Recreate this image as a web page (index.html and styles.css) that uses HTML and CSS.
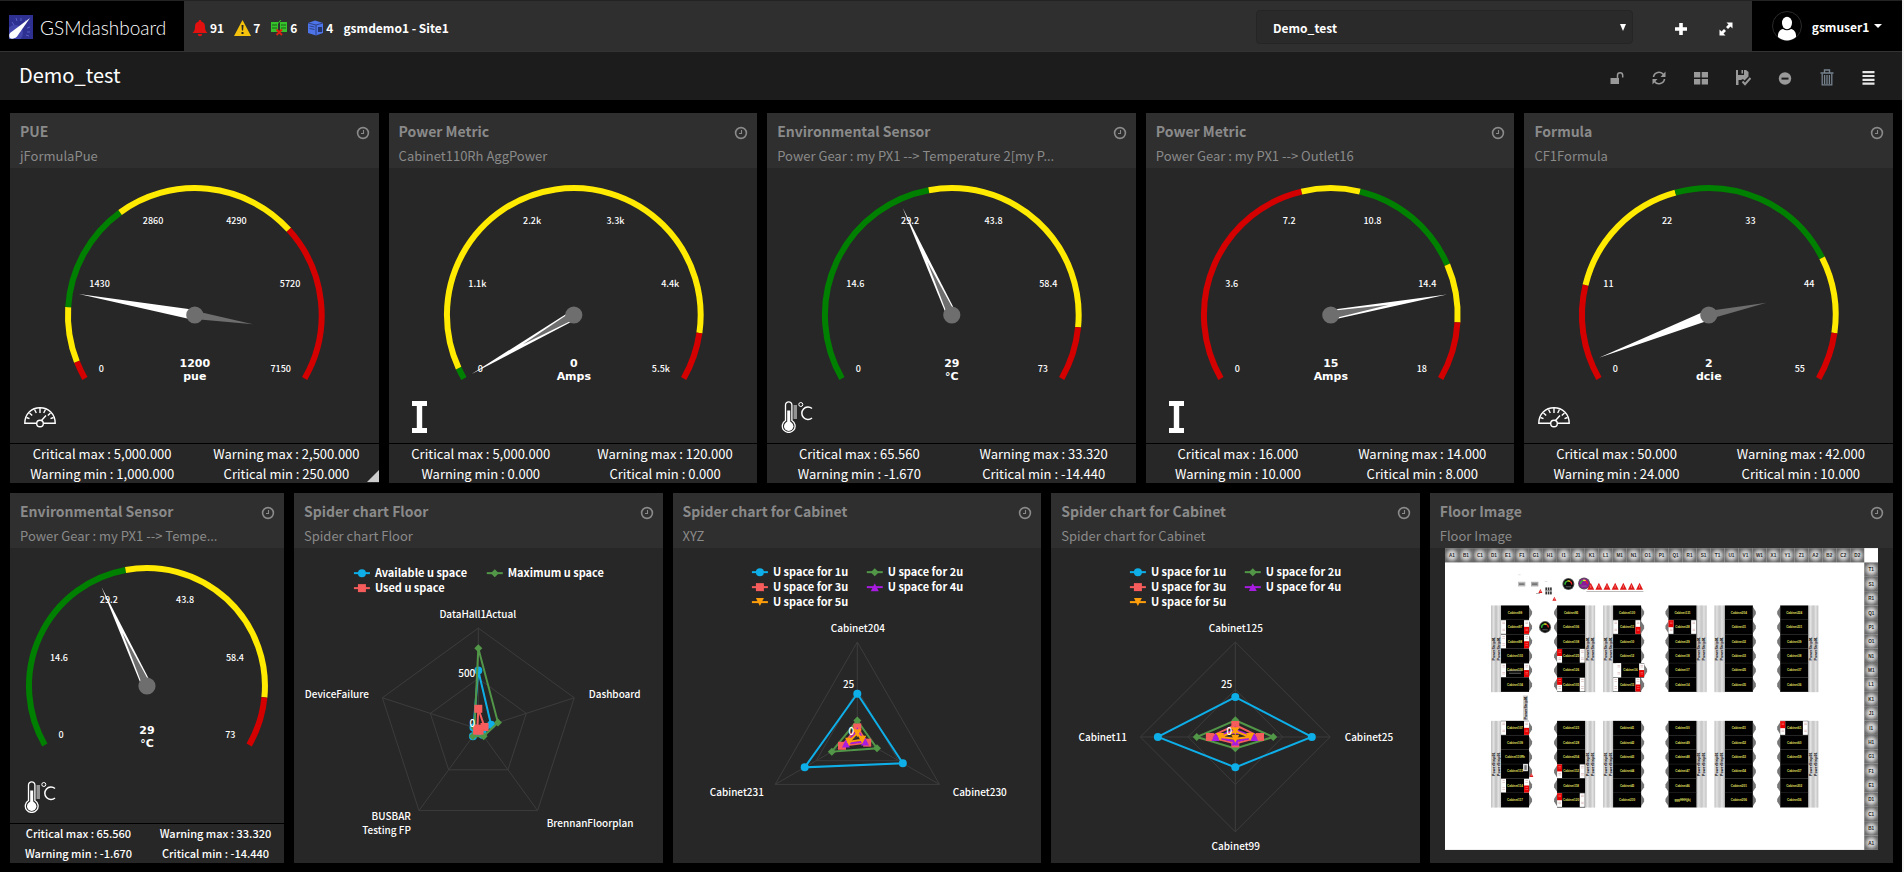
FILE: index.html
```html
<!DOCTYPE html>
<html lang="en">
<head>
<meta charset="utf-8">
<title>GSMdashboard</title>
<link rel="stylesheet" href="styles.css">
</head>
<body>
<svg class="sprite" aria-hidden="true">
  <symbol id="clock" viewBox="0 0 14 14"><circle cx="7" cy="7" r="5.4" fill="none" stroke="currentColor" stroke-width="1.6"/><path d="M7.5 4v3.5H5" fill="none" stroke="currentColor" stroke-width="1.1"/></symbol>
  <symbol id="dial" viewBox="0 0 32 32"><g fill="none" stroke="#fff" stroke-width="1.4"><path d="M13 22.300H.8C.8 13 7.500 6.800 16 6.800S31.200 13 31.200 22.300H19"/><circle cx="16" cy="22.500" r="3.300"/><path d="M16 7v5M10.500 8.500l1.800 3.500M21.500 8.500l-1.800 3.500M5.500 12l2.700 2.500M26.500 12l-2.700 2.500M2.500 16.500l3 1.200M29.500 16.500l-3 1.200M17.500 19.500l4.500-5"/></g></symbol>
  <symbol id="ibeam" viewBox="0 0 32 32"><path d="M9 0h15v5h-4.800v22H24v5H9v-5h4.800V5H9z" fill="#fff"/></symbol>
  <symbol id="thermo" viewBox="0 0 32 32"><g fill="none" stroke="#fff"><path d="M4.500 19.500V4a3.200 3.200 0 0 1 6.400 0v15.500a6.400 6.400 0 1 1-6.400 0z" stroke-width="1.300"/><path d="M7.700 9.500V22" stroke-width="3"/><path d="M12.500 5h3.500M12.500 7h3.500M12.500 9h3.500M12.500 11h3.500M12.500 13h3.500M12.500 15h3.500M12.500 17h3.500" stroke-width="1"/><circle cx="19.800" cy="3.500" r="2" stroke-width="1"/><path d="M31 7.500a6.200 6.200 0 1 0 0 9.500" stroke-width="1.500"/></g><circle cx="7.700" cy="25.200" r="4.700" fill="#fff"/></symbol>
</svg>

<header class="topbar">
  <a class="brand" href="#">
    <svg width="24" height="24" viewBox="0 0 24 24" aria-hidden="true"><rect width="24" height="24" fill="#2e3192"/><circle cx="6" cy="18" r="8" fill="#4347ac"/><path d="M3 7l2 3M7 3l1 3M12 3v3M17 5l-1 2M21 12l-3 1M21 17h-3M20 21l-3-1" stroke="#5a5fc4" stroke-width="1"/><path d="M21 3L8 21.500a4 4 0 0 1-7-3.500z" fill="#fff"/><circle cx="3.200" cy="20.800" r="3" fill="#fff"/></svg>
    <span>GSMdashboard</span>
  </a>
  <div class="alerts">
    <span class="alert"><svg width="16" height="18" viewBox="0 0 16 18" aria-hidden="true"><path d="M8 1c1 0 1.300.6 1.300 1.400 2.500.6 3.700 2.600 3.700 5 0 3.400.8 5 2.500 6.600H.5C2.200 12.400 3 10.800 3 7.400c0-2.400 1.200-4.400 3.700-5C6.700 1.600 7 1 8 1zM5.800 15h4.400a2.200 2.200 0 0 1-4.400 0z" fill="#e31010"/></svg>91</span>
    <span class="alert"><svg width="17" height="16" viewBox="0 0 17 16" aria-hidden="true"><path d="M8.500 0L17 16H0z" fill="#f4c20d"/><path d="M7.500 5h2l-.4 5.500H7.900zM7.500 12h2v2h-2z" fill="#222"/></svg>7</span>
    <span class="alert"><svg width="18" height="16" viewBox="0 0 18 16" aria-hidden="true"><path d="M1 2h7v10H1zM10 2h7v10h-7z" fill="#36c22a"/><path d="M2 5h5M2 8h5M11 5h5M11 8h5" stroke="#1c5c16"/><path d="M7 4c2 0 2-4 4-3.500" fill="none" stroke="#36c22a"/><path d="M6.500 9.500l5.500 5.500M12 9.500l-5.500 5.500" stroke="#e32010" stroke-width="1.800"/></svg>6</span>
    <span class="alert"><svg width="17" height="16" viewBox="0 0 17 16" aria-hidden="true"><path d="M1 3l7-2.500L16 3v10l-7 2.500L1 13z" fill="#4d74e8"/><path d="M1 3l8 2 7-2M9 5v10.500M2.500 6l5 1M2.500 8.500l5 1" fill="none" stroke="#24356d" stroke-width=".8"/><rect x="11" y="7" width="4" height="5" fill="#24356d"/></svg>4</span>
    <span>gsmdemo1 - Site1</span>
  </div>
  <div class="picker">
    <select aria-label="Dashboard"><option>Demo_test</option></select>
  </div>
  <button class="nav-btn" aria-label="Add"><svg width="12" height="12" viewBox="0 0 12 12"><path d="M4.200 0h3.600v4.200H12v3.600H7.800V12H4.200V7.800H0V4.200h4.200z" fill="#fff"/></svg></button>
  <button class="nav-btn" aria-label="Full screen"><svg width="14" height="14" viewBox="0 0 14 14"><path d="M7.500 .5H13.500V6.500L11.500 4.500 9 7 7 5 9.500 2.500zM6.500 13.500H.5V7.500L2.500 9.500 5 7 7 9 4.500 11.500z" fill="#fff"/></svg></button>
  <button class="user">
    <svg width="30" height="30" viewBox="0 0 30 30" aria-hidden="true"><circle cx="15" cy="15" r="14.500" fill="none" stroke="#2a2a2a"/><ellipse cx="15" cy="12" rx="5" ry="6.200" fill="#fff"/><path d="M6 26c-.5-4.500 2-7.500 5-8 2.500 1.800 5.500 1.800 8 0 3 .5 5.500 3.500 5 8-5 4.500-13 4.500-18 0z" fill="#fff"/></svg>
    <span>gsmuser1</span>
    <i class="caret"></i>
  </button>
</header>

<div class="titlebar">
  <h1>Demo_test</h1>
  <div class="tools">
    <button aria-label="Unlock"><svg width="14" height="14" viewBox="0 0 14 14"><path d="M.5 7h8.500v6H.5z" fill="#999"/><path d="M7.500 7V4.300a2.600 2.600 0 0 1 5.200 0V6.500" fill="none" stroke="#999" stroke-width="1.500"/></svg></button>
    <button aria-label="Refresh"><svg width="14" height="14" viewBox="0 0 14 14"><path d="M1.500 6A5.600 5.600 0 0 1 11.500 3.500M12.500 8A5.600 5.600 0 0 1 2.500 10.500" fill="none" stroke="#999" stroke-width="1.600"/><path d="M13.500.5V6H8.500zM.5 13.500V8H5.500z" fill="#999"/></svg></button>
    <button aria-label="Layout"><svg width="14" height="14" viewBox="0 0 14 14"><path d="M0 1h6.300v5.500H0zM7.700 1H14v5.500H7.700zM0 8h6.300v5.500H0zM7.700 8H14v5.500H7.700z" fill="#999"/></svg></button>
    <button aria-label="Save"><svg width="16" height="16" viewBox="0 0 16 16"><path d="M1 0h2v5h6V0h2l2.500 2v4.500L9.500 10.500 8 9 6 10H3.500v5H1zM6.500 0H8v3.500H6.500z" fill="#999"/><path d="M7.500 11.500l2.500 2.700 5.500-6.200" fill="none" stroke="#999" stroke-width="2"/></svg></button>
    <button aria-label="Remove"><svg width="14" height="14" viewBox="0 0 14 14"><circle cx="7" cy="7.500" r="6.200" fill="#999"/><path d="M3.500 6.600h7v2h-7z" fill="#1c1c1c"/></svg></button>
    <button aria-label="Delete"><svg width="14" height="18" viewBox="0 0 14 18"><path d="M.5 4h13M4.500 3.500V1h5v2.500" fill="none" stroke="#76828e" stroke-width="1.400"/><path d="M2.200 4.500v11.300h9.600V4.500M4.600 6v9M7 6v9M9.400 6v9" fill="none" stroke="#76828e" stroke-width="1.300"/></svg></button>
    <button aria-label="Menu"><svg width="14" height="14" viewBox="0 0 14 14"><path d="M.5 0h12v2.200H.5zM.5 3.900h12v2.200H.5zM.5 7.700h12v2.200H.5zM.5 11.500h12v2.200H.5z" fill="#e6e6e6"/></svg></button>
  </div>
</div>

<main class="board">
  <section class="card">
    <header><h2>PUE</h2><p>jFormulaPue</p><svg class="clock"><use href="#clock"/></svg></header>
    <div class="body"><svg class="chart" data-gauge="pue"></svg><svg class="kind"><use href="#dial"/></svg></div>
    <footer><span>Critical max : 5,000.000</span><span>Warning max : 2,500.000</span><span>Warning min : 1,000.000</span><span>Critical min : 250.000</span></footer>
    <i class="grip"></i>
  </section>
  <section class="card">
    <header><h2>Power Metric</h2><p>Cabinet110Rh AggPower</p><svg class="clock"><use href="#clock"/></svg></header>
    <div class="body"><svg class="chart" data-gauge="cabinet"></svg><svg class="kind"><use href="#ibeam"/></svg></div>
    <footer><span>Critical max : 5,000.000</span><span>Warning max : 120.000</span><span>Warning min : 0.000</span><span>Critical min : 0.000</span></footer>
  </section>
  <section class="card">
    <header><h2>Environmental Sensor</h2><p>Power Gear : my PX1 --&gt; Temperature 2[my P...</p><svg class="clock"><use href="#clock"/></svg></header>
    <div class="body"><svg class="chart" data-gauge="temp"></svg><svg class="kind"><use href="#thermo"/></svg></div>
    <footer><span>Critical max : 65.560</span><span>Warning max : 33.320</span><span>Warning min : -1.670</span><span>Critical min : -14.440</span></footer>
  </section>
  <section class="card">
    <header><h2>Power Metric</h2><p>Power Gear : my PX1 --&gt; Outlet16</p><svg class="clock"><use href="#clock"/></svg></header>
    <div class="body"><svg class="chart" data-gauge="outlet"></svg><svg class="kind"><use href="#ibeam"/></svg></div>
    <footer><span>Critical max : 16.000</span><span>Warning max : 14.000</span><span>Warning min : 10.000</span><span>Critical min : 8.000</span></footer>
  </section>
  <section class="card">
    <header><h2>Formula</h2><p>CF1Formula</p><svg class="clock"><use href="#clock"/></svg></header>
    <div class="body"><svg class="chart" data-gauge="dcie"></svg><svg class="kind"><use href="#dial"/></svg></div>
    <footer><span>Critical max : 50.000</span><span>Warning max : 42.000</span><span>Warning min : 24.000</span><span>Critical min : 10.000</span></footer>
  </section>

  <section class="card narrow">
    <header><h2>Environmental Sensor</h2><p>Power Gear : my PX1 --&gt; Tempe...</p><svg class="clock"><use href="#clock"/></svg></header>
    <div class="body"><svg class="chart" data-gauge="tempSmall"></svg><svg class="kind"><use href="#thermo"/></svg></div>
    <footer><span>Critical max : 65.560</span><span>Warning max : 33.320</span><span>Warning min : -1.670</span><span>Critical min : -14.440</span></footer>
  </section>
  <section class="card">
    <header><h2>Spider chart Floor</h2><p>Spider chart Floor</p><svg class="clock"><use href="#clock"/></svg></header>
    <div class="body"><svg class="chart" data-spider="floor"></svg></div>
  </section>
  <section class="card">
    <header><h2>Spider chart for Cabinet</h2><p>XYZ</p><svg class="clock"><use href="#clock"/></svg></header>
    <div class="body"><svg class="chart" data-spider="xyz"></svg></div>
  </section>
  <section class="card">
    <header><h2>Spider chart for Cabinet</h2><p>Spider chart for Cabinet</p><svg class="clock"><use href="#clock"/></svg></header>
    <div class="body"><svg class="chart" data-spider="cabinet"></svg></div>
  </section>
  <section class="card wide">
    <header><h2>Floor Image</h2><p>Floor Image</p><svg class="clock"><use href="#clock"/></svg></header>
    <div class="body floor"><svg id="floorplan" viewBox="60 189 1299 905"></svg></div>
  </section>
</main>
<script src="script.js"></script>
</body>
</html>
```
FILE: styles.css
```css
* { box-sizing: border-box; }

body {
  margin: 0;
  min-height: 100vh;
  background: #000;
  border-right: 2px solid #f4f4f4;
  color: #fff;
  font-family: "Noto Sans CJK SC", "Noto Sans", sans-serif;
  font-size: 13px;
}

button {
  background: none;
  border: 0;
  padding: 0;
  color: inherit;
  font: inherit;
  display: flex;
  align-items: center;
  justify-content: center;
}

h1, h2, p { margin: 0; }

.sprite { display: none; }

/* Top bar */
.topbar {
  display: flex;
  align-items: stretch;
  height: 52px;
  background: #2f2f2f;
  border-top: 1px solid #232323;
  border-bottom: 1px solid #333;
}

.brand {
  display: flex;
  align-items: center;
  gap: 7px;
  width: 184px;
  padding: 2px 0 0 9px;
  background: #000;
  color: #fff;
  text-decoration: none;
  font-family: Lato, sans-serif;
  font-size: 19px;
  font-weight: 300;
}

.alerts {
  display: flex;
  align-items: center;
  gap: 10px;
  padding: 3px 0 0 8px;
  font-size: 12px;
  font-weight: 700;
  line-height: 20px;
}

.alert { display: flex; align-items: center; gap: 2px; }

.picker {
  position: relative;
  width: 377px;
  height: 34px;
  margin: 9px 25px 0 auto;
}

.picker select {
  appearance: none;
  width: 100%;
  height: 100%;
  padding: 0 16px;
  background: #2a2a2a;
  border: 1px solid #252525;
  border-radius: 4px;
  color: #fff;
  font: 700 12px "Noto Sans CJK SC", sans-serif;
}

.picker::after {
  content: "";
  position: absolute;
  right: 7px;
  top: 14px;
  border: 3px solid transparent;
  border-top: 7px solid #fff;
  border-bottom: 0;
  pointer-events: none;
}

.nav-btn { width: 45px; padding-top: 6px; }

.user {
  gap: 10px;
  width: 150px;
  margin-left: 4px;
  background: #000;
  font-size: 12px;
  font-weight: 700;
}

.caret {
  border: 4px solid transparent;
  border-top-color: #fff;
  border-bottom: 0;
  margin-left: -5px;
}

/* Title bar */
.titlebar {
  display: flex;
  justify-content: space-between;
  height: 48px;
  padding: 0 12px 0 19px;
  background: #1c1c1c;
}

.titlebar h1 {
  font-size: 20px;
  font-weight: 400;
  line-height: 46px;
}

.tools { display: flex; }
.tools button { width: 42px; padding-top: 3px; }

/* Widget grid */
.board {
  display: grid;
  grid-template-columns: repeat(20, minmax(0, 1fr));
  grid-auto-rows: 370px;
  gap: 10px;
  padding: 13px 9px 9px 10px;
}

.card {
  position: relative;
  grid-column: span 4;
  display: flex;
  flex-direction: column;
  background: #272727;
}

.card.narrow { grid-column: span 3; }
.card.wide { grid-column: span 5; }

.card header {
  position: relative;
  height: 55px;
  padding: 8px 10px 0;
  background: #2f2f2f;
  color: #8a8a8a;
}

.card h2 {
  font-size: 14px;
  font-weight: 700;
  line-height: 20px;
}

.card p {
  margin-top: 5px;
  font-size: 13px;
  line-height: 20px;
  white-space: nowrap;
}

.clock {
  position: absolute;
  right: 9px;
  top: 13px;
  width: 14px;
  height: 14px;
}

.body { position: relative; flex: 1; min-height: 0; }
.chart { display: block; width: 100%; height: 100%; }

.kind {
  position: absolute;
  left: 14px;
  bottom: 10px;
  width: 32px;
  height: 32px;
}

.card footer {
  display: grid;
  grid-template-columns: 1fr 1fr;
  height: 40px;
  border-top: 1px solid #000;
  font-size: 13px;
  line-height: 19px;
  text-align: center;
  white-space: nowrap;
}

.narrow footer { font-size: 11px; font-weight: 500; }

.grip {
  position: absolute;
  right: 0;
  bottom: 1px;
  border-left: 12px solid transparent;
  border-bottom: 12px solid #ccc;
}

/* Charts */
.tick { fill: #fff; font-size: 9px; font-weight: 500; }
.reading { fill: #fff; font: bold 11px "DejaVu Sans", sans-serif; }
.axis { fill: #fff; font-size: 10px; font-weight: 500; }
.legend { fill: #fff; font-size: 11px; font-weight: 700; }
.web { fill: none; stroke: #3c3c3c; stroke-width: 1; }

.floor { padding: 0 15px; }
.floor svg { display: block; width: 100%; height: 302px; }
.floor text { text-anchor: middle; }
.coord { fill: #222; font: bold 14px "Liberation Sans", sans-serif; }
.cab { fill: #e0e060; font: bold 9px "Liberation Sans", sans-serif; }
.strip { fill: #000; font: bold 11px "Liberation Sans", sans-serif; }
```
FILE: script.js
```js
const RED = '#d40000', YELLOW = '#ffea00', GREEN = '#008000';

const gauges = {
  pue: { max: 7150, value: 1200, text: '1200', unit: 'pue', tail: 99, ticks: ['0', '1430', '2860', '4290', '5720', '7150'],
    bands: [[250, RED], [1000, YELLOW], [2500, GREEN], [5000, YELLOW], [7150, RED]] },
  cabinet: { max: 5500, value: 0, text: '0', unit: 'Amps', ticks: ['0', '1.1k', '2.2k', '3.3k', '4.4k', '5.5k'],
    bands: [[120, GREEN], [5000, YELLOW], [5500, RED]] },
  temp: { max: 73, value: 29, text: '29', unit: '°C', ticks: ['0', '14.6', '29.2', '43.8', '58.4', '73'],
    bands: [[33.32, GREEN], [65.56, YELLOW], [73, RED]] },
  outlet: { max: 18, value: 15, text: '15', unit: 'Amps', ticks: ['0', '3.6', '7.2', '10.8', '14.4', '18'],
    bands: [[8, RED], [10, YELLOW], [14, GREEN], [16, YELLOW], [18, RED]] },
  dcie: { max: 55, value: 2, text: '2', unit: 'dcie', tail: 78, ticks: ['0', '11', '22', '33', '44', '55'],
    bands: [[10, RED], [24, YELLOW], [42, GREEN], [50, YELLOW], [55, RED]] }
};
gauges.tempSmall = { ...gauges.temp, width: 274, radius: 121, cy: 138 };

const polar = (cx, cy, r, deg) => {
  const a = deg * Math.PI / 180;
  return [cx + r * Math.sin(a), cy - r * Math.cos(a)];
};

function drawGauge(svg, g) {
  const w = g.width || 369, cx = Math.round(w / 2), cy = g.cy || 147, R = g.radius || 130;
  const angle = v => v / g.max * 240 - 120;
  let out = '', from = 0;
  for (const [to, color] of g.bands) {
    const a = angle(from), b = angle(to);
    const [x1, y1] = polar(cx, cy, R - 3, a), [x2, y2] = polar(cx, cy, R - 3, b);
    out += `<path d="M${x1} ${y1}A${R - 3} ${R - 3} 0 ${b - a > 180 ? 1 : 0} 1 ${x2} ${y2}" fill="none" stroke="${color}" stroke-width="6"/>`;
    from = to;
  }
  g.ticks.forEach((t, i) => {
    const [x, y] = polar(cx, cy, R - 20, -120 + 48 * i);
    const row = Math.min(i, 5 - i), left = i < 3;
    const anchor = row === 2 ? 'middle' : left ? 'start' : 'end';
    const dx = row === 2 ? (left ? 3 : -3) : (left ? -1 : 1);
    out += `<text class="tick" x="${x + dx}" y="${y + [2, 6, 9][row]}" text-anchor="${anchor}">${t}</text>`;
  });
  const a = angle(g.value), tail = g.tail === undefined ? a : g.tail;
  out += `<g transform="translate(${cx} ${cy})">
    <path d="M-5 0L0 ${-(R - 12)}L5 0z" fill="#fff" transform="rotate(${a})"/>
    <path d="M-4 0L0 -59L4 0z" fill="#6e6e6e" transform="rotate(${tail})"/>
    <circle r="8.600" fill="#6e6e6e"/></g>`;
  const base = cy + Math.round(R * 0.4);
  out += `<text class="reading" x="${cx}" y="${base}" text-anchor="middle">${g.text}</text>
    <text class="reading" x="${cx}" y="${base + 13}" text-anchor="middle">${g.unit}</text>`;
  svg.setAttribute('viewBox', `0 0 ${w} 275`);
  svg.innerHTML = out;
}

const palette = ['#0eafe8', '#529648', '#f65c5c', '#a81be0', '#ff9e0b'];
const spiders = {
  floor: { cy: 181, radius: 101, max: 1000, mid: '500', legendX: [60, 193], legendY: 25,
    names: ['Available u space', 'Maximum u space', 'Used u space'],
    labels: [['DataHall1Actual', 184, 70, 'middle'], ['Dashboard', 295, 150, 'start'], ['BrennanFloorplan', 253, 279, 'start'],
      ['BUSBAR', 117, 272, 'end'], ['Testing FP', 117, 286, 'end'], ['DeviceFailure', 75, 150, 'end']],
    data: [[580, 133, 70, 90, 50], [800, 205, 90, 90, 40], [200, 65, 20, 20, 10]] },
  xyz: { cy: 189, radius: 95, max: 50, mid: '25', legendX: [79, 194], legendY: 24,
    labels: [['Cabinet204', 185, 84, 'middle'], ['Cabinet230', 280, 248, 'start'], ['Cabinet231', 91, 248, 'end']],
    data: [[22.8, 27.7, 32], [8.7, 12, 15.5], [5, 6, 9.3], [3, 4.7, 6.9], [2, 3, 5]] },
  cabinet: { cy: 189, radius: 95, max: 50, mid: '25', legendX: [79, 194], legendY: 24,
    labels: [['Cabinet125', 185, 84, 'middle'], ['Cabinet25', 294, 193, 'start'], ['Cabinet99', 185, 302, 'middle'], ['Cabinet11', 76, 193, 'end']],
    data: [[21, 40.3, 16, 40.8], [8.8, 20, 6, 20.3], [6.3, 13, 3.4, 13.4], [3.7, 10, 2.4, 10.4], [3, 7.8, 1, 8]] }
};

function marker(i, x, y) {
  const c = palette[i];
  return [
    `<circle cx="${x}" cy="${y}" r="4" fill="${c}"/>`,
    `<path d="M${x} ${y - 4}l4 4-4 4-4-4z" fill="${c}"/>`,
    `<path d="M${x - 4} ${y - 4}h8v8h-8z" fill="${c}"/>`,
    `<path d="M${x} ${y - 4}l4 8h-8z" fill="${c}"/>`,
    `<path d="M${x - 4} ${y - 4}h8l-4 8z" fill="${c}"/>`
  ][i];
}

function drawSpider(svg, s) {
  const cx = 184.5, { cy, radius, max } = s, n = s.data[0].length;
  const poly = rs => rs.map((r, i) => polar(cx, cy, r, 360 / n * i).join(',')).join(' ');
  const names = s.names || [1, 2, 3, 4, 5].map(k => `U space for ${k}u`);
  let out = '';
  names.forEach((name, i) => {
    const x = s.legendX[i % 2], y = s.legendY + 15 * Math.floor(i / 2);
    out += `<path d="M${x} ${y}h16" stroke="${palette[i]}" stroke-width="2"/>${marker(i, x + 8, y)}
      <text class="legend" x="${x + 21}" y="${y + 4}">${name}</text>`;
  });
  out += `<polygon class="web" points="${poly(Array(n).fill(radius))}"/><polygon class="web" points="${poly(Array(n).fill(radius / 2))}"/>`;
  for (let i = 0; i < n; i++) {
    const [x, y] = polar(cx, cy, radius, 360 / n * i);
    out += `<path class="web" d="M${cx} ${cy}L${x} ${y}"/>`;
  }
  s.data.forEach((row, i) => {
    const rs = row.map(v => v / max * radius);
    out += `<polygon points="${poly(rs)}" fill="none" stroke="${palette[i]}" stroke-width="2"/>`;
    rs.forEach((r, k) => { const [x, y] = polar(cx, cy, r, 360 / n * k); out += marker(i, x, y); });
  });
  for (const [t, x, y, anchor] of s.labels) out += `<text class="axis" x="${x}" y="${y}" text-anchor="${anchor}">${t}</text>`;
  out += `<text class="axis" x="${cx - 3}" y="${cy - radius / 2 - 2}" text-anchor="end">${s.mid}</text>
    <text class="axis" x="${cx - 3}" y="${cy - 2}" text-anchor="end">0</text>`;
  svg.setAttribute('viewBox', '0 0 369 315');
  svg.innerHTML = out;
}

function drawFloor(svg) {
  const rect = (x, y, w, h, f, extra = '') => `<rect x="${x}" y="${y}" width="${w}" height="${h}" fill="${f}" ${extra}/>`;
  const text = (c, x, y, t, extra = '') => `<text class="${c}" x="${x}" y="${y}" ${extra}>${t}</text>`;
  let out = `<defs><radialGradient id="tile" r=".7"><stop offset="0" stop-color="#ececec"/><stop offset=".35" stop-color="#c4c4c4"/><stop offset=".7" stop-color="#747474"/><stop offset="1" stop-color="#5c5c5c"/></radialGradient>
    <linearGradient id="bar"><stop offset="0" stop-color="#bdbdbd"/><stop offset=".5" stop-color="#e2e2e2"/><stop offset="1" stop-color="#c8c8c8"/></linearGradient></defs>`;
  out += rect(60, 189, 1299, 905, '#fff');
  const tileW = 1257 / 30, tileH = 862 / 20;
  for (let i = 0; i < 30; i++) {
    out += rect(60 + i * tileW, 189, tileW, 43, 'url(#tile)') +
      text('coord', 60 + (i + .5) * tileW, 216, String.fromCharCode(65 + i % 26) + (i < 26 ? 1 : 2));
  }
  for (let i = 0; i < 20; i++) {
    out += rect(1317, 232 + i * tileH, 42, tileH, 'url(#tile)') +
      text('coord', 1338, 259 + i * tileH, String.fromCharCode(84 - i) + 1);
  }
  const cell = 43.2;
  const columns = [
    { x: 228, bar: 198, dir: 1 }, { x: 396, bar: 480, dir: -1 }, { x: 564, bar: 534, dir: 1 },
    { x: 730, bar: 814, dir: -1 }, { x: 899, bar: 868, dir: 1 }, { x: 1065, bar: 1149, dir: -1 }
  ];
  const ids = [
    [['Cabinet99', 'Cabinet97', 'Cabinet98', 'Cabinet103', 'Cabinet100', 'Cabinet104'], ['Cabinet107', 'Cabinet109', 'Cabinet110Rh', 'Cabinet113', 'Cabinet114', 'Cabinet117']],
    [['Cabinet95', 'Cabinet106', 'Cabinet108', 'Cabinet125', 'Cabinet126', 'Cabinet105'], ['Cabinet123', 'Cabinet128', 'Cabinet204', 'Cabinet112', 'Cabinet118', 'Cabinet120']],
    [['Cabinet130', 'Cabinet11', 'Cabinet10', 'Cabinet12', 'Cabinet16', 'Cabinet15'], ['Cabinet41', 'Cabinet42', 'Cabinet43', 'Cabinet44', 'Cabinet45', 'Cabinet230']],
    [['Cabinet131', 'Cabinet28', 'Cabinet29', 'Cabinet18', 'Cabinet17', 'Cabinet14'], ['Cabinet50', 'Cabinet49', 'Cabinet48', 'Cabinet47', 'Cabinet46', 'gggHHHjjkj']],
    [['Cabinet204', 'Cabinet31', 'Cabinet32', 'Cabinet33', 'Cabinet25', 'Cabinet35'], ['Cabinet51', 'Cabinet52', 'Cabinet53', 'Cabinet54', 'Cabinet201', 'Cabinet206']],
    [['Cabinet224', 'Cabinet231', 'Cabinet39', 'Cabinet38', 'Cabinet37', 'Cabinet36'], ['Cabinet61', 'Cabinet60', 'Cabinet59', 'Cabinet57', 'Cabinet202', 'Cabinet56']]
  ];
  const cabinet = (x, y, w, dir) => {
    const e = dir > 0 ? x + w : x, d = 9 * dir;
    return `<path d="M${e} ${y + 4}l${d} 14v8l${-d} 14z" fill="#777"/>` + rect(x, y, w, cell, '#000') + rect(x, y + cell - 1, w, 1, '#222');
  };
  [361, 707].forEach((top, row) => columns.forEach((c, k) => {
    for (const b of [0, 15]) {
      out += rect(c.bar + b, top, 14, 260, 'url(#bar)') + rect(c.bar + b + 14, top, 1, 260, '#999') +
        text('strip', 0, 0, 'PowerStrip01', `transform="translate(${c.bar + b + 12} ${top + 130}) rotate(-90)"`);
    }
    for (let i = 0; i < 6; i++) {
      const y = top + i * cell, shifted = row === 0 && k === 2 && i === 4;
      out += shifted ? cabinet(588, y, 69, 1) : cabinet(c.x, y, 84, c.dir);
      out += text('cab', shifted ? 616 : c.x + 42, y + 25, ids[k][row][i]);
    }
  }));
  // Rack sensors: two stacked readings, with the alarming half in red.
  const sensor = (x, y, red) => {
    let s = rect(x, y + 1, 15, 41, '#fff');
    if (red !== undefined) s += rect(x, y + 1 + red * 20, 15, 21, '#e80000');
    for (const [k, dy] of [[0, 6], [0, 11], [1, 27], [1, 32]]) s += rect(x + 4, y + dy, 8, 1.500, red === k ? '#ff8a8a' : '#c89a9a');
    return s;
  };
  const pairs = [
    [228, 297, 361, 1, , 1], [228, 297, 361, 2, , 1], [228, 297, 361, 4, , 1], [396, 464, 361, 3, 0], [396, 464, 361, 5, 0],
    [564, 631, 361, 1, , 1], [573, 642, 361, 4, , 1], [564, 631, 361, 5, , 1], [730, 798, 361, 1, 0],
    [228, 297, 707, 0, , 1], [228, 297, 707, 4, , 1], [396, 464, 707, 3, 0], [396, 464, 707, 5, 0], [1065, 1133, 707, 0, 0]
  ];
  for (const [l, r, top, i, redL, redR] of pairs) out += sensor(l, top + i * cell, redL) + sensor(r, top + i * cell, redR);
  out += rect(247, 556, 44, 2, '#999') + rect(252, 563, 36, 2, '#999');

  const meter = (x, y, f) => `<circle cx="${x}" cy="${y}" r="18" fill="#555"/><circle cx="${x}" cy="${y}" r="15" fill="${f}"/>
    <path d="M${x - 10} ${y + 2}a10 10 0 0 1 7-11" fill="none" stroke="#3b3" stroke-width="4"/><path d="M${x - 3} ${y - 9}a10 10 0 0 1 8 1" fill="none" stroke="#ee2" stroke-width="4"/>
    <path d="M${x + 5} ${y - 8}a10 10 0 0 1 5 9" fill="none" stroke="#e22" stroke-width="4"/><path d="M${x - 8} ${y + 8}h16" stroke="#888" stroke-width="2"/>`;
  out += meter(430, 297, '#0a0a0a') + meter(477, 295, '#8a1a9a') + meter(360, 426, '#0a0a0a');
  const tri = (x, y, h) => `<path d="M${x} ${y}l${h / 2} ${h}h${-h}z" fill="#e01818"/><path d="M${x} ${y + h * .35}v${h * .4}" stroke="#fbb" stroke-width="1.500"/>`;
  for (let i = 0; i < 7; i++) out += tri(497 + i * 24.400, 293, 21);
  out += rect(484, 318, 171, 2, '#999') + tri(346, 312, 12) + tri(388, 335, 12) + tri(319, 863, 12);
  out += rect(333, 324, 12, 2, '#888') + rect(279, 290, 22, 14, '#bbb') + rect(318, 290, 22, 14, '#aaa') + rect(282, 295, 16, 4, '#666') + rect(321, 295, 16, 4, '#666');
  for (const x of [361, 368, 375]) out += rect(x, 307, 5, 9, '#333') + rect(x, 319, 5, 9, '#333');
  out += rect(360, 316, 21, 2, '#777') + rect(279, 269, 8, 1, '#aaa') + rect(359, 289, 8, 1, '#aaa');
  out += rect(294, 631, 15, 75, '#ccc') + text('strip', 0, 0, 'PowerStrip01', 'transform="translate(306 668) rotate(-90)"') + rect(294, 836, 15, 22, '#ddd') + rect(298, 840, 7, 14, '#777');
  svg.innerHTML = out;
}

document.querySelectorAll('[data-gauge]').forEach(el => drawGauge(el, gauges[el.dataset.gauge]));
document.querySelectorAll('[data-spider]').forEach(el => drawSpider(el, spiders[el.dataset.spider]));
drawFloor(document.getElementById('floorplan'));
```
